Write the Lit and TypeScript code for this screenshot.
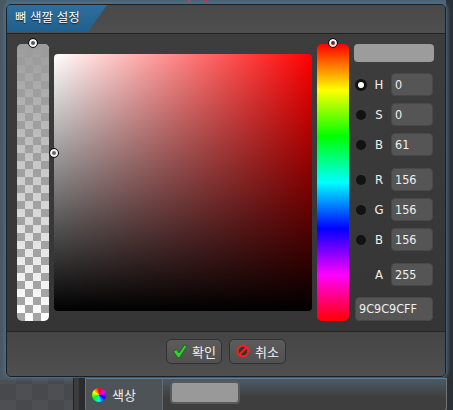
import { LitElement, html, css } from "lit";
import { customElement } from "lit/decorators.js";

const rows1 = [["H", "0", true], ["S", "0", false], ["B", "61", false]] as const;
const rows2 = [["R", "156", false], ["G", "156", false], ["B", "156", false]] as const;

@customElement("app-root")
export class AppRoot extends LitElement {
  static styles = css`
    :host { display: block; width: 453px; height: 410px; overflow: hidden; position: relative;
      font-family: "DejaVu Sans Condensed", "DejaVu Sans", "Noto Sans CJK KR", sans-serif; color: #f0f0f0;
      background: #2a3036; }
    .backdrop { position: absolute; left: 0; top: 0; bottom: 0; width: 73px;
      background-color: #47494c;
      background-image: conic-gradient(#4d4f52 25%, #0000 0 50%, #4d4f52 0 75%, #0000 0);
      background-size: 32px 32px; }
    .backdrop-top { position: absolute; left: 0; right: 7px; top: 0; height: 40px; background: #4c6070; }
    .backdrop-left { position: absolute; left: 0; width: 6px; top: 0; height: 380px; background: #4a5862; }
    .mark { position: absolute; top: 0; width: 2px; height: 2px; background: #d8334a; }
    .m1 { left: 188px; }
    .m2 { left: 206px; height: 3px; background: #e82030; }
    .stage { position: relative; display: flex; flex-direction: column; height: 100%; }
    .dialog { margin: 4px 0 0 6px; width: 440px; height: 373px; box-sizing: border-box; flex: none;
      display: flex; flex-direction: column; border-radius: 5px; background: #3a3a3a;
      border: 1px solid #1b2024; box-shadow: 0 0 4px 1px #4f7a99; overflow: hidden; }
    .title { height: 28px; flex: none; background: linear-gradient(#494949, #4e4e4e); border-bottom: 1px solid #222; display: flex; }
    .tab { width: 100px; padding-left: 8px; height: 27px; line-height: 26px; box-sizing: border-box;
      background: linear-gradient(#2d6f9f, #215f8c); font-size: 12.5px; white-space: nowrap;
      clip-path: polygon(0 0, 100px 0, 81px 100%, 0 100%); color: #fff; text-shadow: 0 1px 1px #123; }
    .body { flex: 1; display: flex; padding: 10px 12px 0 10px; background: linear-gradient(#3d3d3d, #353535); box-sizing: border-box; min-height: 0; }
    .strip { position: relative; width: 32px; height: 277px; border-radius: 5px; flex: none; }
    .alpha { background-color: #fff;
      background-image: conic-gradient(#a5a5a5 25%, #fff 0 50%, #a5a5a5 0 75%, #fff 0);
      background-size: 16px 16px; background-position: 0 5px; }
    .alpha::before { content: ""; position: absolute; inset: 0; border-radius: 5px;
      background: linear-gradient(#9c9c9c, #9c9c9c00); }
    .sv { width: 258px; height: 257px; margin: 10px 5px 0 5px; flex: none; border-radius: 4px;
      background: linear-gradient(to bottom, #0000, #000), linear-gradient(to right, #fff, #f00); }
    .hue { background: linear-gradient(#f00 0%, #ff0 16.67%, #0f0 33.33%, #0ff 50%, #00f 66.67%, #f0f 83.33%, #f00 100%); }
    .knob { position: absolute; width: 4px; height: 4px; border-radius: 50%; border: 2px solid #f4f4f4;
      outline: 1px solid #0c0c0c; background: transparent; }
    .k-alpha { left: 12px; top: -5px; background: #555; }
    .k-hue { left: 12px; top: -5px; }
    .k-sv { left: 33px; top: 105px; background: #666; }
    .side { width: 80px; margin-left: 5px; flex: none; display: flex; flex-direction: column; }
    .swatch { height: 18px; border-radius: 4px; background: #9c9c9c; width: 80px; margin-bottom: 11px; }
    .group { display: flex; flex-direction: column; gap: 7px; }
    .group + .group { margin-top: 12px; }
    .row { display: flex; align-items: center; height: 23px; }
    .radio { width: 10px; height: 10px; border-radius: 50%; background: #121212; margin-left: 2px; flex: none; }
    .radio.on { width: 6px; height: 6px; background: #fff; border: 3px solid #111; margin-left: 1px; margin-right: -1px; box-sizing: content-box; }
    .radio.none { visibility: hidden; }
    .label { width: 14px; margin-left: 6px; margin-right: 5px; font-size: 13px; text-align: center; flex: none; }
    .input { width: 42px; height: 23px; box-sizing: border-box; border-radius: 4px; background: #555; border: 1px solid #484848;
      font-size: 12.5px; line-height: 21px; padding-left: 3px; flex: none; }
    .hex { width: 78px; height: 24px; line-height: 22px; margin: 11px 0 0 1px; }
    .alpha-row { margin-top: 12px; }
    .footer { height: 45px; flex: none; border-top: 1px solid #242424; background: linear-gradient(#454545, #4f4f4f);
      display: flex; justify-content: center; align-items: center; gap: 7px; padding: 0 0 6px 0; box-sizing: border-box; }
    .btn { height: 25px; box-sizing: border-box; border-radius: 5px; border: 1px solid #303030; background: linear-gradient(#5c5c5c, #505050);
      display: flex; align-items: center; font-size: 13px; color: #f0f0f0; }
    .btn.ok { width: 56px; gap: 4px; padding: 0 5px; }
    .btn.cancel { width: 57px; gap: 5px; padding: 0 6px; }
    .bottom { display: flex; flex: 1; margin-top: 1px; }
    .pad { width: 73px; flex: none; border-right: 1px solid #1f2224; }
    .pad2 { width: 5px; flex: none; background: #3c3c3c; }
    .gap { width: 6px; background: #2b2c2d; flex: none; }
    .prop { flex: 1; margin-right: 6px; display: flex; background: linear-gradient(#4b5a66, #3e3e3e 60%); border: 1px solid #737373; border-top-color: #5f7f99; height: 33px; border-radius: 0 0 3px 3px; box-sizing: border-box; }
    .name { width: 77px; flex: none; display: flex; align-items: center; gap: 6px; padding-left: 6px; box-sizing: border-box; background: #4d5357; border-right: 1px solid #6a6a6a; font-size: 13px; }
    .wheel { width: 14px; height: 14px; border-radius: 50%; background: conic-gradient(#f00, #f0f, #00f, #0ff, #0f0, #ff0, #f00); flex: none; }
    .val { margin: 2px 0 0 7px; width: 70px; height: 23px; box-sizing: border-box; border: 2px solid #5a5a5a; border-radius: 4px; background: #999; }
  `;

  private row(r: readonly [string, string, boolean]) {
    return html`<div class="row"><span class="radio ${r[2] ? "on" : ""}"></span><span class="label">${r[0]}</span><span class="input">${r[1]}</span></div>`;
  }

  render() {
    return html`
      <div class="backdrop"></div><div class="backdrop-top"></div><div class="backdrop-left"></div>
      <span class="mark m1"></span><span class="mark m2"></span>
      <div class="stage">
        <div class="dialog">
          <div class="title"><div class="tab">뼈 색깔 설정</div></div>
          <div class="body">
            <div class="strip alpha"><span class="knob k-alpha"></span><span class="knob k-sv"></span></div>
            <div class="sv"></div>
            <div class="strip hue"><span class="knob k-hue"></span></div>
            <div class="side">
              <div class="swatch"></div>
              <div class="group">${rows1.map((r) => this.row(r))}</div>
              <div class="group">${rows2.map((r) => this.row(r))}</div>
              <div class="row alpha-row"><span class="radio none"></span><span class="label">A</span><span class="input">255</span></div>
              <div class="input hex">9C9C9CFF</div>
            </div>
          </div>
          <div class="footer">
            <div class="btn ok">
              <svg width="16" height="16" viewBox="0 0 16 16"><path d="M1.5 8.5 L4.5 6.5 L7 10 L12.5 2 L15 3 L7.5 14.5 L5.8 14.5 Z" fill="#2fd62f" stroke="#0b5a0b" stroke-width=".7"/></svg>
              <span>확인</span>
            </div>
            <div class="btn cancel">
              <svg width="14" height="14" viewBox="0 0 14 14"><circle cx="7" cy="7" r="5.4" fill="#333" stroke="#ee2222" stroke-width="2.2"/><path d="M3.2 10.8 L10.8 3.2" stroke="#ee2222" stroke-width="2.2"/></svg>
              <span>취소</span>
            </div>
          </div>
        </div>
        <div class="bottom">
          <div class="pad"></div><div class="pad2"></div><div class="gap"></div>
          <div class="prop">
            <div class="name"><span class="wheel"></span><span>색상</span></div>
            <div class="val"></div>
          </div>
        </div>
      </div>`;
  }
}
